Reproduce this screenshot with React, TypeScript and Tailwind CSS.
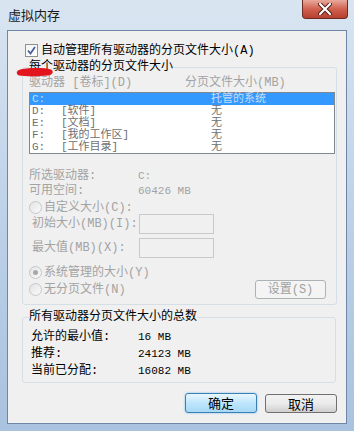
import type { ReactNode } from 'react';

const cjk = '"Liberation Mono", "Noto Sans CJK SC", monospace';
const ui = '"Noto Sans CJK SC", "Liberation Sans", sans-serif';

const drives = [
  { letter: 'C:', label: '', size: '托管的系统', selected: true },
  { letter: 'D:', label: '[软件]', size: '无' },
  { letter: 'E:', label: '[文档]', size: '无' },
  { letter: 'F:', label: '[我的工作区]', size: '无' },
  { letter: 'G:', label: '[工作目录]', size: '无' },
];

const Radio = ({ checked }: { checked?: boolean }) => (
  <span className="flex h-[13px] w-[13px] shrink-0 items-center justify-center rounded-full border border-[#c4c7ca] bg-gradient-to-br from-[#e4e4e4] to-[#fafafa]">
    {checked && <span className="h-[5px] w-[5px] rounded-full bg-[#a8a8a8]" />}
  </span>
);

const GroupBox = ({ title, children, className }: { title: string; children: ReactNode; className?: string }) => (
  <fieldset className={`ml-[14px] w-[314px] rounded-[3px] border border-[#d5dfe5] pl-[6px] pr-px ${className ?? ''}`}>
    <legend className="text-[12px] leading-[12px] text-black" style={{ fontFamily: cjk }}>
      {title}
    </legend>
    {children}
  </fieldset>
);

const Value = ({ children }: { children: ReactNode }) => (
  <span className="text-[11px] leading-[12px]" style={{ fontFamily: '"Liberation Mono", monospace' }}>
    {children}
  </span>
);

export default function App() {
  return (
    <div
      className="relative flex h-[431px] w-[354px] flex-col overflow-hidden bg-gradient-to-b from-[#d9e5f1] via-[#bdd1e8] to-[#a9c2df] px-[7px]"
      style={{ fontFamily: cjk }}
    >
      {/* title bar */}
      <div className="flex h-[30px] shrink-0 items-start">
        <span className="mt-[7px] ml-px text-[13px] leading-[15px] text-[#1b1b1b]" style={{ fontFamily: ui }}>
          虚拟内存
        </span>
        <button
          type="button"
          className="ml-auto -mr-px flex h-[19px] w-[46px] items-center justify-center rounded-b-[4px] border border-t-0 border-[#6b2c24] bg-gradient-to-b from-[#e8a99c] via-[#d0604f] to-[#b7402f]"
        >
          <svg width="14" height="12" viewBox="0 0 14 12">
            <path d="M2 1 L12 11 M12 1 L2 11" stroke="#4a1a14" strokeWidth="4" strokeLinecap="round" />
            <path d="M2 1 L12 11 M12 1 L2 11" stroke="#ffffff" strokeWidth="2.2" strokeLinecap="round" />
          </svg>
        </button>
      </div>

      {/* client area */}
      <div className="flex h-[394px] w-[340px] shrink-0 flex-col border border-[#6f87a6] bg-[#f0f0f0] text-[12px] leading-[12px] text-black">
        <div className="mt-[13px] flex items-center pl-[17px]">
          <span className="flex h-[13px] w-[13px] items-center justify-center border border-[#8e8f8f] bg-gradient-to-br from-[#f4f4f4] to-[#ffffff]">
            <svg width="9" height="9" viewBox="0 0 9 9">
              <path d="M1 4.5 L3.5 7.5 L8 1" stroke="#4a5f97" strokeWidth="1.8" fill="none" />
            </svg>
          </span>
          <span className="ml-[3px]">自动管理所有驱动器的分页文件大小(A)</span>
        </div>

        <GroupBox title="每个驱动器的分页文件大小" className="mt-[4px] pb-[5px]">
          <div className="mt-[4px] flex text-[#a3a3a3]">
            <span className="w-[156px]">驱动器 [卷标](D)</span>
            <span>分页文件大小(MB)</span>
          </div>
          <div className="mt-[3px] h-[62px] w-[306px] border border-[#828790] bg-white">
            {drives.map((d) => (
              <div
                key={d.letter}
                className={`flex h-[12px] items-center text-[11px] leading-[11px] ${d.selected ? 'bg-[#3399ff] text-[#c6dcf6]' : 'text-[#707070]'}`}
              >
                <span className="w-[31px] pl-[2px]">{d.letter}</span>
                <span className="w-[150px]">{d.label}</span>
                <span>{d.size}</span>
              </div>
            ))}
          </div>

          <div className="mt-[16px] flex text-[#a3a3a3]">
            <span className="w-[109px]">所选驱动器:</span>
            <Value>C:</Value>
          </div>
          <div className="mt-[3px] flex text-[#a3a3a3]">
            <span className="w-[109px]">可用空间:</span>
            <Value>60426 MB</Value>
          </div>

          <div className="mt-[4px] flex h-[13px] items-center text-[#a3a3a3]">
            <Radio />
            <span className="ml-[2px]">自定义大小(C):</span>
          </div>
          <div className="flex h-[20px] items-center text-[#a3a3a3]">
            <span className="w-[110px] pl-[3px]">初始大小(MB)(I):</span>
            <span className="h-[20px] w-[75px] border border-[#c9c9c9] bg-[#f0f0f0]" />
          </div>
          <div className="mt-[4px] flex h-[20px] items-center text-[#a3a3a3]">
            <span className="w-[110px] pl-[3px]">最大值(MB)(X):</span>
            <span className="h-[20px] w-[75px] border border-[#c9c9c9] bg-[#f0f0f0]" />
          </div>

          <div className="mt-[8px] flex h-[13px] items-center text-[#a3a3a3]">
            <Radio checked />
            <span className="ml-[2px]">系统管理的大小(Y)</span>
          </div>
          <div className="mt-px flex h-[19px] w-[306px] items-center pr-[9px] text-[#a3a3a3]">
            <Radio />
            <span className="ml-[2px]">无分页文件(N)</span>
            <button
              type="button"
              className="ml-auto h-[19px] w-[71px] rounded-[3px] border border-[#adb2b5] bg-[#f4f4f4] text-[12px] text-[#a0a0a0]"
              style={{ fontFamily: cjk }}
            >
              设置(S)
            </button>
          </div>
        </GroupBox>

        <GroupBox title="所有驱动器分页文件大小的总数" className="mt-[6px] pb-[5px]">
          <div className="mt-[8px] flex pl-[2px]">
            <span className="w-[107px]">允许的最小值:</span>
            <Value>16 MB</Value>
          </div>
          <div className="mt-[5px] flex pl-[2px]">
            <span className="w-[107px]">推荐:</span>
            <Value>24123 MB</Value>
          </div>
          <div className="mt-[5px] flex pl-[2px]">
            <span className="w-[107px]">当前已分配:</span>
            <Value>16082 MB</Value>
          </div>
        </GroupBox>

        <div className="mt-[10px] flex justify-end gap-[8px] pr-[9px]" style={{ fontFamily: ui }}>
          <button
            type="button"
            className="h-[20px] w-[72px] rounded-[3px] border border-[#3c7fb1] bg-gradient-to-b from-[#eaf6fd] via-[#bee6fd] to-[#a7d9f5] text-[13px] leading-[18px] text-black shadow-[0_0_2px_#5fb4ee]"
          >
            确定
          </button>
          <button
            type="button"
            className="mt-px h-[19px] w-[72px] rounded-[3px] border border-[#707070] bg-gradient-to-b from-[#f2f2f2] via-[#ebebeb] to-[#cfcfcf] text-[13px] leading-[17px] text-black"
          >
            取消
          </button>
        </div>
      </div>

      {/* red annotation stroke */}
      <svg className="absolute left-[16px] top-[67px]" width="38" height="10" viewBox="0 0 38 10">
        <path d="M3 3 C 10 0.5, 28 0.5, 35 2.5 C 38 4, 37 8, 32 8.5 C 22 9.5, 9 9.5, 3 8.5 C 0 7.5, 0 4, 3 3 Z" fill="#e2141c" />
      </svg>
    </div>
  );
}
